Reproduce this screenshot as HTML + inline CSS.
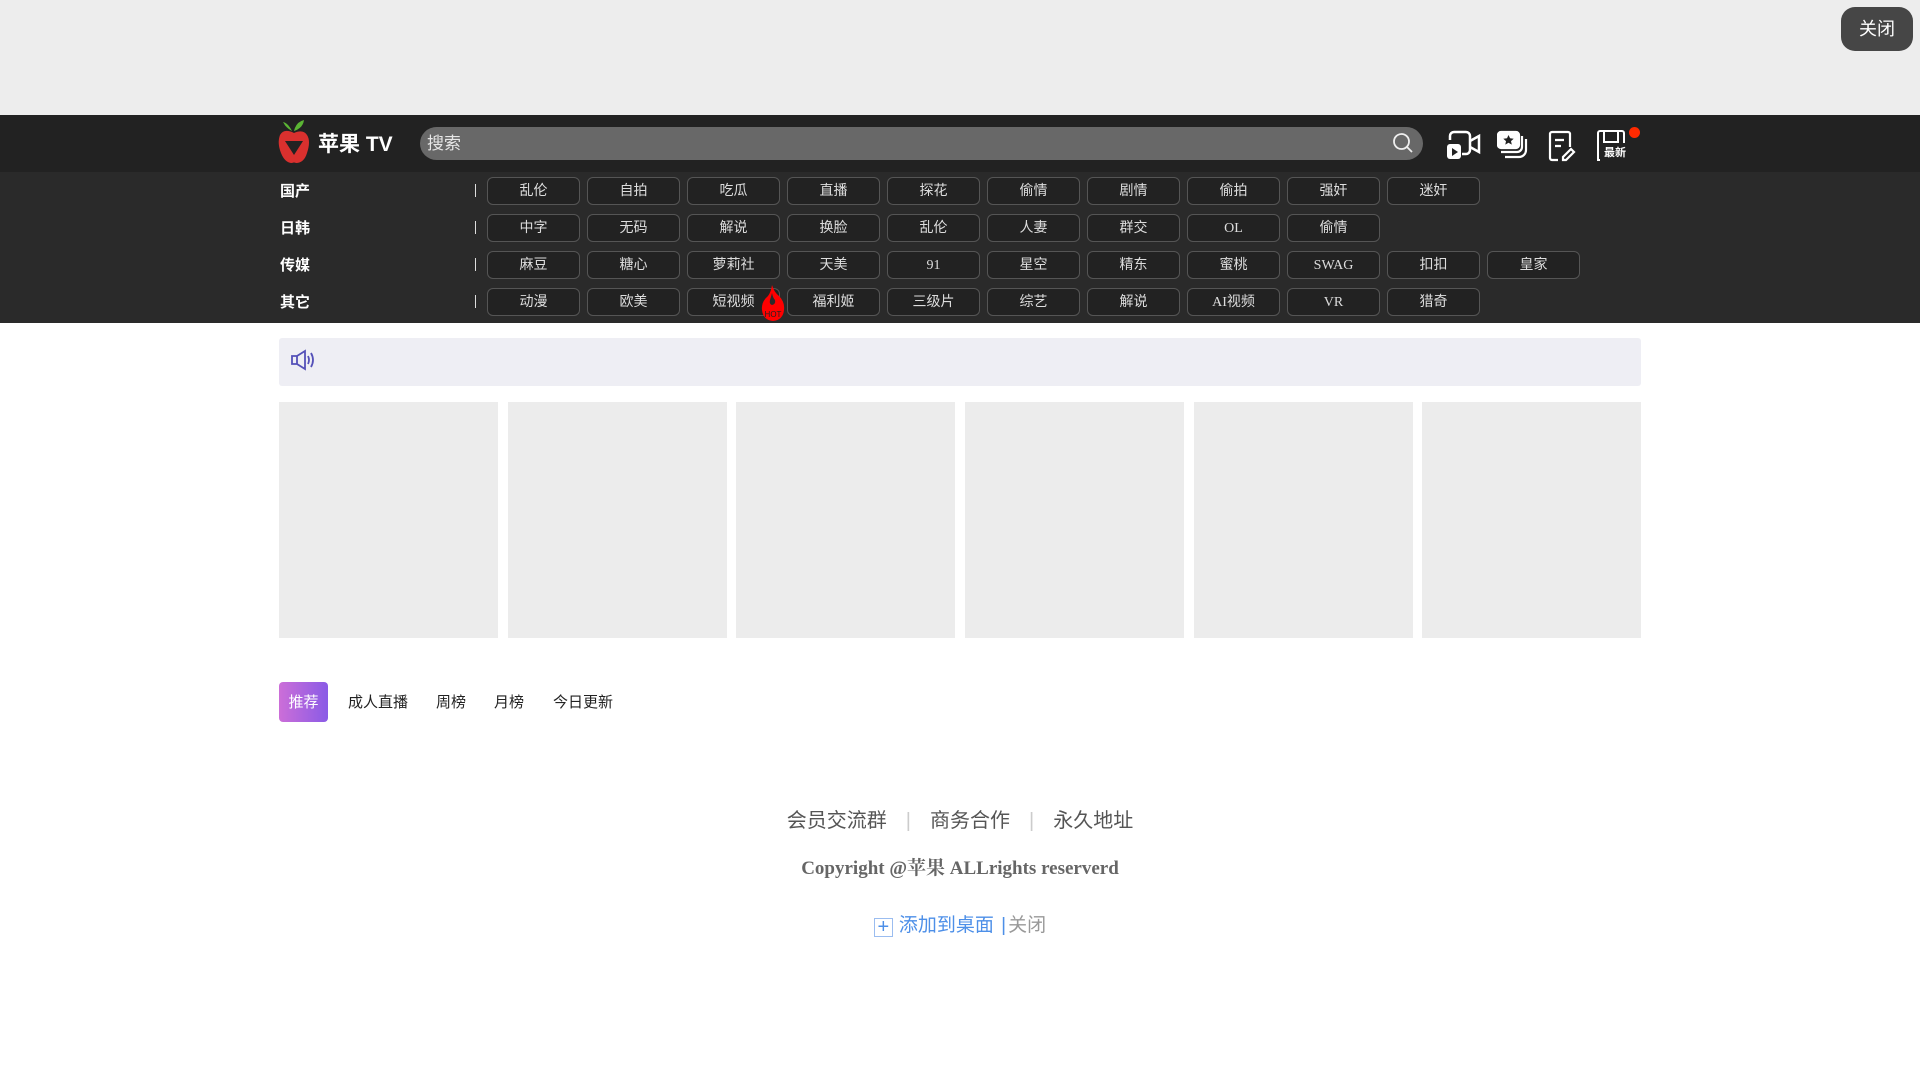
<!DOCTYPE html>
<html><head><meta charset="utf-8"><style>
*{margin:0;padding:0;box-sizing:border-box}
body{width:1920px;height:1080px;background:#fff;font-family:"Liberation Sans","Noto Sans CJK SC",sans-serif;position:relative;overflow:hidden}
.abs{position:absolute}
.top{left:0;top:0;width:1920px;height:115px;background:#ededed}
.close{left:1841px;top:7px;width:72px;height:44px;background:#464646;border-radius:14px;color:#fff;font-size:18px;line-height:44px;text-align:center}
.hdr{left:0;top:115px;width:1920px;height:57px;background:#222}
.nav{left:0;top:172px;width:1920px;height:151px;background:#2a2a2a}
.search{left:420px;top:127px;width:1003px;height:33px;background:#686868;border-radius:17px;color:#e6e6e6;font-size:17px;line-height:33px;padding-left:7px}
.lbl{left:280px;color:#fff;font-weight:bold;font-size:15px;line-height:28px}
.sep{left:475px;width:1px;height:13px;background:#ddd}
.btn{width:93px;height:28px;border:1px solid #555;border-radius:6px;background:#222;color:#ddd;font-size:14px;line-height:28px;text-align:center;font-family:"Liberation Serif","Noto Sans CJK SC",sans-serif}
.notice{left:279px;top:338px;width:1362px;height:48px;background:#eeeef4;border-radius:3px}
.card{top:402px;width:219px;height:236px;background:#ececec}
.tab{top:682px;height:40px;line-height:42px;font-size:15px;color:#222}
</style></head><body>
<div class="abs top"></div>
<div class="abs close">关闭</div>
<div class="abs hdr"></div>
<svg class="abs" style="left:276px;top:119px" width="36" height="46" viewBox="0 0 36 46">
<path d="M16 12 Q12 4 7 3 Q10 9 16 12Z" fill="#5bb534"/><path d="M18 12 Q20 3 28 1 Q27 9 18 12Z" fill="#5bb534"/>
<path d="M18 14 Q8 9 4 16 Q1 24 5 34 Q9 44 16 44 Q18 43 20 44 Q28 44 31 34 Q35 22 31 16 Q27 10 18 14Z" fill="#d9302e"/>
<path d="M9 22 L27 22 L18 36Z" fill="#222"/></svg>
<div class="abs" style="left:318px;top:131px;color:#fff;font-weight:bold;font-size:21px;line-height:28px">苹果 TV</div>
<div class="abs search">搜索</div>
<svg class="abs" style="left:1391px;top:131px" width="24" height="24" viewBox="0 0 24 24" fill="none" stroke="#eee" stroke-width="1.8"><circle cx="10.5" cy="10.5" r="7.5"/><path d="M16 16l5 5"/></svg>
<svg class="abs" style="left:1446px;top:130px" width="36" height="32" viewBox="0 0 36 32" fill="none" stroke="#fff" stroke-width="2.5"><path d="M4 10V6a4 4 0 0 1 4-4h12a4 4 0 0 1 4 4v14a4 4 0 0 1-4 4h-4"/><path d="M24 11l9-5v16l-9-5"/><rect x="1" y="14" width="14" height="15" rx="3" fill="#fff" stroke="none"/><path d="M6 18v8l6-4z" fill="#222" stroke="none"/></svg>
<svg class="abs" style="left:1497px;top:130px" width="34" height="32" viewBox="0 0 34 32" fill="none" stroke="#fff" stroke-width="2.2"><rect x="1" y="2" width="21" height="16" rx="3" fill="#fff"/><path d="M11.5 5l1.6 3.3 3.6.4-2.7 2.4.8 3.5-3.3-1.9-3.2 1.9.7-3.5L6.3 8.7l3.7-.4z" fill="#222" stroke="none"/><path d="M4 22h16a5 5 0 0 0 5-5V6"/><path d="M8 27h14a7 7 0 0 0 7-7V9"/></svg>
<svg class="abs" style="left:1548px;top:130px" width="28" height="32" viewBox="0 0 28 32" fill="none" stroke="#fff" stroke-width="2.2"><path d="M10 30H4a2 2 0 0 1-2-2V4a2 2 0 0 1 2-2h16a2 2 0 0 1 2 2v13"/><path d="M7 10h9M7 16h6"/><path d="M23 19l3 3-8 8h-3v-3z"/></svg>
<svg class="abs" style="left:1596px;top:130px" width="34" height="32" viewBox="0 0 34 32" fill="none" stroke="#fff" stroke-width="2"><path d="M4 30H2V3a2 2 0 0 1 2-2h22a2 2 0 0 1 2 2v10"/><path d="M8 2v10h14V2"/></svg>
<div class="abs" style="left:1604px;top:147px;color:#fff;font-size:11px;font-weight:bold;line-height:12px">最新</div>
<div class="abs" style="left:1629px;top:127px;width:11px;height:11px;border-radius:50%;background:#ff2a00"></div>
<div class="abs nav"></div>
<div class="abs lbl" style="top:178px">国产</div><div class="abs lbl" style="top:215px">日韩</div><div class="abs lbl" style="top:252px">传媒</div><div class="abs lbl" style="top:289px">其它</div>
<div class="abs sep" style="top:184px"></div><div class="abs sep" style="top:221px"></div><div class="abs sep" style="top:258px"></div><div class="abs sep" style="top:295px"></div>
<div class="abs btn" style="left:487px;top:177px">乱伦</div><div class="abs btn" style="left:587px;top:177px">自拍</div><div class="abs btn" style="left:687px;top:177px">吃瓜</div><div class="abs btn" style="left:787px;top:177px">直播</div><div class="abs btn" style="left:887px;top:177px">探花</div><div class="abs btn" style="left:987px;top:177px">偷情</div><div class="abs btn" style="left:1087px;top:177px">剧情</div><div class="abs btn" style="left:1187px;top:177px">偷拍</div><div class="abs btn" style="left:1287px;top:177px">强奸</div><div class="abs btn" style="left:1387px;top:177px">迷奸</div>
<div class="abs btn" style="left:487px;top:214px">中字</div><div class="abs btn" style="left:587px;top:214px">无码</div><div class="abs btn" style="left:687px;top:214px">解说</div><div class="abs btn" style="left:787px;top:214px">换脸</div><div class="abs btn" style="left:887px;top:214px">乱伦</div><div class="abs btn" style="left:987px;top:214px">人妻</div><div class="abs btn" style="left:1087px;top:214px">群交</div><div class="abs btn" style="left:1187px;top:214px">OL</div><div class="abs btn" style="left:1287px;top:214px">偷情</div>
<div class="abs btn" style="left:487px;top:251px">麻豆</div><div class="abs btn" style="left:587px;top:251px">糖心</div><div class="abs btn" style="left:687px;top:251px">萝莉社</div><div class="abs btn" style="left:787px;top:251px">天美</div><div class="abs btn" style="left:887px;top:251px">91</div><div class="abs btn" style="left:987px;top:251px">星空</div><div class="abs btn" style="left:1087px;top:251px">精东</div><div class="abs btn" style="left:1187px;top:251px">蜜桃</div><div class="abs btn" style="left:1287px;top:251px">SWAG</div><div class="abs btn" style="left:1387px;top:251px">扣扣</div><div class="abs btn" style="left:1487px;top:251px">皇家</div>
<div class="abs btn" style="left:487px;top:288px">动漫</div><div class="abs btn" style="left:587px;top:288px">欧美</div><div class="abs btn" style="left:687px;top:288px">短视频</div><div class="abs btn" style="left:787px;top:288px">福利姬</div><div class="abs btn" style="left:887px;top:288px">三级片</div><div class="abs btn" style="left:987px;top:288px">综艺</div><div class="abs btn" style="left:1087px;top:288px">解说</div><div class="abs btn" style="left:1187px;top:288px">AI视频</div><div class="abs btn" style="left:1287px;top:288px">VR</div><div class="abs btn" style="left:1387px;top:288px">猎奇</div>
<svg class="abs" style="left:761px;top:284px" width="24" height="38" viewBox="0 0 24 38"><path d="M11 1 Q13 8 18 12 Q24 18 23 26 Q22 36 12 37 Q2 36 1 26 Q0 18 7 12 Q10 8 11 1Z" fill="#f00"/><path d="M11 9 Q12 14 14 16 Q15 20 11 21 Q8 20 9 16 Q10 13 11 9Z" fill="#2a2a2a"/><text x="12" y="33" font-size="8" fill="#222" text-anchor="middle" font-family="Liberation Sans">HOT</text></svg>
<div class="abs notice"></div>
<svg class="abs" style="left:290px;top:348px" width="26" height="24" viewBox="0 0 26 24" fill="none" stroke="#5450b8" stroke-width="1.8"><path d="M2 8h5v8H2zM7 8l8-5v18l-8-5"/><path d="M18 8q2 4 0 8M21 5q4 7 0 14"/></svg>
<div class="abs card" style="left:279px"></div><div class="abs card" style="left:508px"></div><div class="abs card" style="left:736px"></div><div class="abs card" style="left:965px"></div><div class="abs card" style="left:1194px"></div><div class="abs card" style="left:1422px"></div>
<div class="abs tab" style="left:279px;width:49px;border-radius:4px;background:linear-gradient(90deg,#cc6ed8,#8a5be6);color:#fff;text-align:center">推荐</div>
<div class="abs tab" style="left:348px">成人直播</div><div class="abs tab" style="left:436px">周榜</div><div class="abs tab" style="left:494px">月榜</div><div class="abs tab" style="left:553px">今日更新</div>
<div class="abs" style="left:0;width:1920px;top:807px;text-align:center;font-size:20px;color:#555;line-height:28px">会员交流群<span style="color:#ccc;margin:0 19px">|</span>商务合作<span style="color:#ccc;margin:0 19px">|</span>永久地址</div>
<div class="abs" style="left:0;width:1920px;top:856px;text-align:center;font-size:19px;font-weight:bold;color:#666;font-family:'Liberation Serif','Noto Serif CJK SC',serif;line-height:26px">Copyright @苹果 ALLrights reserverd</div>
<div class="abs" style="left:0;width:1920px;top:912px;text-align:center;font-size:19px;line-height:28px;color:#4d8fe8"><span style="display:inline-block;width:19px;height:19px;border:1px solid #9bbdf0;vertical-align:-2px;line-height:16px;font-size:20px;margin-right:6px">+</span>添加到桌面 <span style="color:#4d8fe8;margin:0 2px">|</span><span style="color:#999">关闭</span></div>
</body></html>
